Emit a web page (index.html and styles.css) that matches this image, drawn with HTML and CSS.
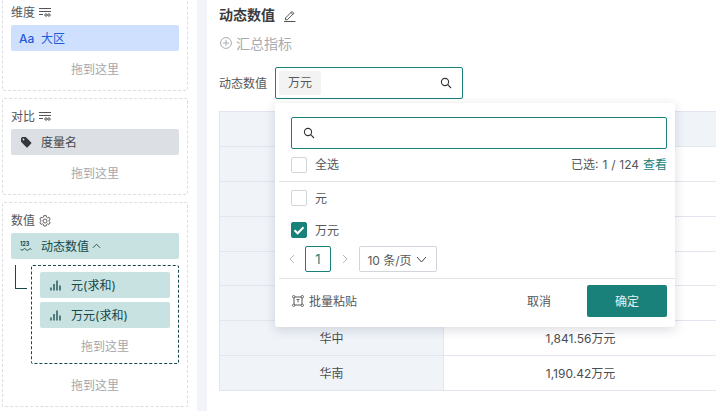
FILE: index.html
```html
<!DOCTYPE html>
<html lang="zh">
<head>
<meta charset="utf-8">
<title>动态数值</title>
<link rel="stylesheet" href="styles.css">
</head>
<body>
<div class="page">
  <aside class="side">
    <section class="well">
      <div class="well-head">维度
        <svg class="ic-sort" viewBox="0 0 12 10"><path d="M0 1.500h12M0 4.500h12M0 7.500h4" fill="none" stroke="#555" stroke-width="1"/><circle cx="7" cy="8" r="1.200" fill="none" stroke="#555"/><circle cx="10" cy="8" r="1.200" fill="none" stroke="#555"/></svg>
      </div>
      <div class="pill pill-blue"><span class="aa">Aa</span><span class="pill-text">大区</span></div>
      <div class="drop">拖到这里</div>
    </section>
    <section class="well">
      <div class="well-head">对比
        <svg class="ic-sort" viewBox="0 0 12 10"><path d="M0 1.500h12M0 4.500h12M0 7.500h4" fill="none" stroke="#555" stroke-width="1"/><circle cx="7" cy="8" r="1.200" fill="none" stroke="#555"/><circle cx="10" cy="8" r="1.200" fill="none" stroke="#555"/></svg>
      </div>
      <div class="pill pill-gray">
        <svg class="pill-ic" viewBox="0 0 12 12"><path d="M1 2.200 2.200 1h3.600l5.400 5.400a.9.9 0 0 1 0 1.200L7.600 11.200a.9.9 0 0 1-1.200 0L1 5.800z" fill="#33383f"/><circle cx="3.500" cy="3.500" r=".9" fill="#dcdfe3"/></svg>
        <span class="pill-text">度量名</span>
      </div>
      <div class="drop">拖到这里</div>
    </section>
    <section class="well well-values">
      <div class="well-head">数值
        <svg class="ic-gear" viewBox="0 0 12 12"><path d="M4.800.6h2.400l.3 1.500 1 .6 1.500-.5 1.200 2-1.200 1v1.200l1.200 1-1.200 2-1.500-.5-1 .6-.3 1.500H4.800l-.3-1.500-1-.6-1.500.5-1.200-2 1.200-1V5.200L.8 4.200l1.200-2 1.500.5 1-.6z" fill="none" stroke="#555" stroke-width=".9"/><circle cx="6" cy="6" r="2" fill="none" stroke="#555" stroke-width=".9"/></svg>
      </div>
      <div class="pill pill-teal">
        <svg class="pill-ic" viewBox="0 0 12 12"><text x="0" y="5.500" class="num-glyph">123</text><path d="M.5 9q1.300 2.500 2.700.5t2.800 0 2.800 0 2.700 0" fill="none" stroke="#14484a" stroke-width=".9"/></svg>
        <span class="pill-text">动态数值</span>
        <svg class="ic-up" viewBox="0 0 10 6"><path d="M1 5 5 1l4 4" fill="none" stroke="#14484a" stroke-width="1"/></svg>
      </div>
      <div class="nest">
        <span class="elbow"></span>
        <div class="nest-box">
          <div class="pill pill-teal pill-sub">
            <svg class="pill-ic" viewBox="0 0 12 12"><path d="M1 8.500v3M4 5v6.500M7 1.500v10M10 6.500v5" fill="none" stroke="#14484a" stroke-width="1.300"/></svg>
            <span class="pill-text">元(求和)</span>
          </div>
          <div class="pill pill-teal pill-sub">
            <svg class="pill-ic" viewBox="0 0 12 12"><path d="M1 8.500v3M4 5v6.500M7 1.500v10M10 6.500v5" fill="none" stroke="#14484a" stroke-width="1.300"/></svg>
            <span class="pill-text">万元(求和)</span>
          </div>
          <div class="drop drop-nest">拖到这里</div>
        </div>
      </div>
      <div class="drop drop-outer">拖到这里</div>
    </section>
  </aside>
  <div class="gutter"></div>
  <main class="main">
    <h1 class="title">动态数值
      <svg class="ic-edit" viewBox="0 0 13 13"><path d="M2.500 9 9 2.500l1.800 1.800-6.500 6.500H2.500zM8 3.500 9.800 5.300" fill="none" stroke="#444" stroke-width=".9"/><path d="M1 12.500h11.500" stroke="#444" stroke-width=".9"/></svg>
    </h1>
    <div class="add">
      <svg class="ic-add" viewBox="0 0 12 12"><circle cx="6" cy="6" r="5.400" fill="none" stroke="#a8abb2"/><path d="M6 3v6M3 6h6" stroke="#a8abb2"/></svg>
      <span>汇总指标</span>
    </div>
    <div class="filter">
      <label class="filter-label">动态数值</label>
      <div class="select">
        <span class="tag">万元</span>
        <svg class="ic-search" viewBox="0 0 12 12"><circle cx="5" cy="5" r="3.600" fill="none" stroke="#333" stroke-width="1.100"/><path d="M7.700 7.700 11 11" stroke="#333" stroke-width="1.100"/></svg>
      </div>
    </div>
    <div class="pop">
      <div class="search">
        <svg class="ic-search" viewBox="0 0 12 12"><circle cx="5" cy="5" r="3.600" fill="none" stroke="#333" stroke-width="1.100"/><path d="M7.700 7.700 11 11" stroke="#333" stroke-width="1.100"/></svg>
      </div>
      <div class="all-row">
        <span class="check"></span><span class="opt">全选</span>
        <span class="count">已选: 1 / 124 <a class="link">查看</a></span>
      </div>
      <div class="list">
        <div class="opt-row"><span class="check"></span><span class="opt">元</span></div>
        <div class="opt-row"><span class="check check-on"><svg viewBox="0 0 16 16"><path d="M3.500 8.200 6.700 11.300 12.500 5.200" fill="none" stroke="#fff" stroke-width="2"/></svg></span><span class="opt">万元</span></div>
      </div>
      <div class="pager">
        <svg class="ic-pg" viewBox="0 0 6 10"><path d="M5 1 1 5l4 4" fill="none" stroke="#bbb"/></svg>
        <span class="pg-num">1</span>
        <svg class="ic-pg" viewBox="0 0 6 10"><path d="M1 1l4 4-4 4" fill="none" stroke="#bbb"/></svg>
        <span class="pg-size">10 条/页
          <svg class="ic-down" viewBox="0 0 11 7"><path d="M1 1l4.500 5L10 1" fill="none" stroke="#444" stroke-width="1"/></svg>
        </span>
      </div>
      <div class="foot">
        <span class="paste">
          <svg class="ic-paste" viewBox="0 0 12 12"><path d="M2 2h8v8H2z" fill="none" stroke="#444" stroke-width=".9"/><circle cx="1.700" cy="1.700" r="1.200" fill="#fff" stroke="#444" stroke-width=".8"/><circle cx="10.300" cy="1.700" r="1.200" fill="#fff" stroke="#444" stroke-width=".8"/><circle cx="1.700" cy="10.300" r="1.200" fill="#fff" stroke="#444" stroke-width=".8"/><circle cx="10.300" cy="10.300" r="1.200" fill="#fff" stroke="#444" stroke-width=".8"/><path d="M4.500 4.500h3M6 4.500v3" stroke="#444" stroke-width=".8" fill="none"/></svg>
          <span class="opt-text">批量粘贴</span>
        </span>
        <span class="cancel">取消</span>
        <button class="ok">确定</button>
      </div>
    </div>
    <table class="grid">
      <tr><th class="col-a"></th><th class="col-b"></th></tr>
      <tr><th></th><td></td></tr>
      <tr><th></th><td></td></tr>
      <tr><th></th><td></td></tr>
      <tr><th></th><td></td></tr>
      <tr><th></th><td></td></tr>
      <tr><th>华中</th><td>1,841.56万元</td></tr>
      <tr><th>华南</th><td>1,190.42万元</td></tr>
    </table>
  </main>
</div>
</body>
</html>
```
FILE: styles.css
```css
* { box-sizing: border-box; }
html, body { margin: 0; height: 100%; overflow: hidden; background: #fff; }
body { font-family: Inter, "Noto Sans CJK SC", sans-serif; font-size: 12px; color: #3f4145; }
.page { display: grid; grid-template-columns: 197px 10px 1fr; height: 411px; overflow: hidden; }

.side { display: flex; flex-direction: column; gap: 7px; padding: 0 9px 0 2px; margin-top: -6px; }
.well { height: 97px; border: 1px dashed #dcdee2; border-radius: 2px; padding: 0 8px; flex: none; }
.well-values { height: 205px; }
.well-head { height: 30px; padding-top: 6px; padding-bottom: 3px; color: #55575b; display: flex; align-items: center; gap: 4px; }
.ic-sort { width: 12px; height: 10px; }
.ic-gear { width: 12px; height: 12px; margin-top: 2px; }
.pill { height: 26px; border-radius: 2px; display: flex; align-items: center; padding-left: 9px; gap: 9px; }
.pill-text { padding-bottom: 2px; }
.pill-ic { width: 12px; height: 12px; flex: none; }
.num-glyph { font-size: 5.500px; font-weight: 700; fill: #14484a; font-family: Inter, sans-serif; }
.pill-blue { background: #cfe0ff; color: #1f5ad7; }
.aa { font-size: 12px; font-weight: 500; width: 15px; margin-left: -1px; margin-right: -2px; }
.pill-gray { background: #dcdfe3; color: #45484d; }
.pill-teal { background: #c7e2e0; color: #14484a; }
.ic-up { width: 9px; height: 6px; margin-left: -6px; }
.drop { text-align: center; color: #a5a7ab; height: 36px; line-height: 38px; }
.nest { display: flex; margin-top: 6px; }
.elbow { width: 12px; height: 24px; margin: 0 4px 0 4px; border-left: 1px solid #14484a; border-bottom: 1px solid #14484a; flex: none; }
.nest-box { width: 148px; height: 99px; border: 1px dashed #14484a; border-radius: 2px; padding: 6px 8px 0; display: flex; flex-direction: column; gap: 4px; }
.pill-sub { padding-left: 10px; flex: none; }
.drop-nest { height: 35px; line-height: 37px; flex: none; margin-top: -4px; }
.drop-outer { height: 42px; line-height: 44px; }

.gutter { background: #f3f4f9; }
.main { position: relative; padding: 5px 0 0 12px; overflow: hidden; }
.title { margin: 0; font-size: 14px; line-height: 20px; font-weight: 600; color: #3a3c40; display: flex; align-items: center; gap: 8px; }
.ic-edit { width: 13px; height: 13px; }
.add { margin-top: 8px; height: 20px; display: flex; align-items: center; gap: 4px; font-size: 14px; color: #a8abb2; padding: 0 0 1px 1px; }
.ic-add { width: 12px; height: 12px; margin-top: 1px; }
.filter { margin-top: 14px; display: flex; align-items: center; gap: 8px; height: 32px; }
.filter-label { width: 48px; color: #55575b; padding-bottom: 2px; }
.select { width: 188px; height: 32px; border: 1px solid #1a807a; border-radius: 2px; display: flex; align-items: center; justify-content: space-between; padding: 0 10px 0 3px; }
.tag { width: 42px; height: 24px; background: #f3f3f3; border-radius: 2px; line-height: 23px; text-align: center; color: #55575b; }
.ic-search { width: 12px; height: 12px; }

.pop { position: absolute; left: 68px; top: 103px; width: 400px; height: 224px; background: #fff; border-radius: 2px; box-shadow: 0 3px 12px rgba(30, 35, 60, .16); padding: 14px 0 0; z-index: 2; display: flex; flex-direction: column; }
.search { margin: 0 8px 0 16px; height: 32px; border: 1px solid #1a807a; border-radius: 2px; display: flex; align-items: center; padding-left: 11px; flex: none; }
.all-row { height: 33px; margin-left: 4px; padding: 0 8px 1px 12px; border-bottom: 1px solid #e2e3e8; display: flex; align-items: center; flex: none; }
.check { width: 16px; height: 16px; border: 1px solid #d3d5dc; border-radius: 2px; background: #fff; flex: none; display: block; }
.check svg { display: block; width: 16px; height: 16px; margin: -1px; }
.check-on { background: #1a807a; border-color: #1a807a; }
.opt { margin-left: 8px; color: #55575b; padding-bottom: 2px; }
.opt-text { padding-bottom: 2px; }
.count { margin-left: auto; color: #55575b; padding-bottom: 2px; word-spacing: .5px; }
.link { color: #1a807a; }
.list { display: flex; flex-direction: column; flex: none; }
.opt-row { height: 32px; padding-left: 16px; display: flex; align-items: center; }
.pager { height: 26px; padding-left: 14px; display: flex; align-items: center; flex: none; }
.ic-pg { width: 6px; height: 10px; }
.pg-num { width: 26px; height: 26px; border: 1px solid #1a807a; border-radius: 2px; margin: 0 11px 0 10px; color: #1a807a; text-align: center; line-height: 24px; font-size: 13px; }
.pg-size { width: 78px; height: 26px; margin-left: 11px; padding-right: 2px; border: 1px solid #d3d5dc; border-radius: 2px; display: flex; align-items: center; justify-content: center; gap: 4px; color: #55575b; }
.ic-down { width: 11px; height: 7px; }
.foot { margin: 6px 0 0 4px; height: 49px; border-top: 1px solid #e2e3e8; display: flex; align-items: center; padding: 0 8px 4px 13px; flex: none; }
.paste { display: flex; align-items: center; gap: 5px; color: #55575b; }
.ic-paste { width: 12px; height: 12px; }
.cancel { margin-left: auto; margin-right: 36px; color: #55575b; padding-bottom: 2px; }
.ok { width: 80px; height: 32px; background: #1a807a; border: 0; border-radius: 2px; color: #e6f2f1; font: inherit; padding: 0 0 2px; }

.grid { position: absolute; left: 12px; top: 111px; width: 498px; border-collapse: collapse; table-layout: fixed; }
.grid th, .grid td { height: 34.900px; border: 1px solid #e3e5ef; padding: 0 0 2px; font-weight: 400; text-align: center; color: #4a4c50; }
.grid th { background: #f0f4f9; }
.grid .col-a { width: 224px; }
.grid .col-b { width: 274px; }
```
